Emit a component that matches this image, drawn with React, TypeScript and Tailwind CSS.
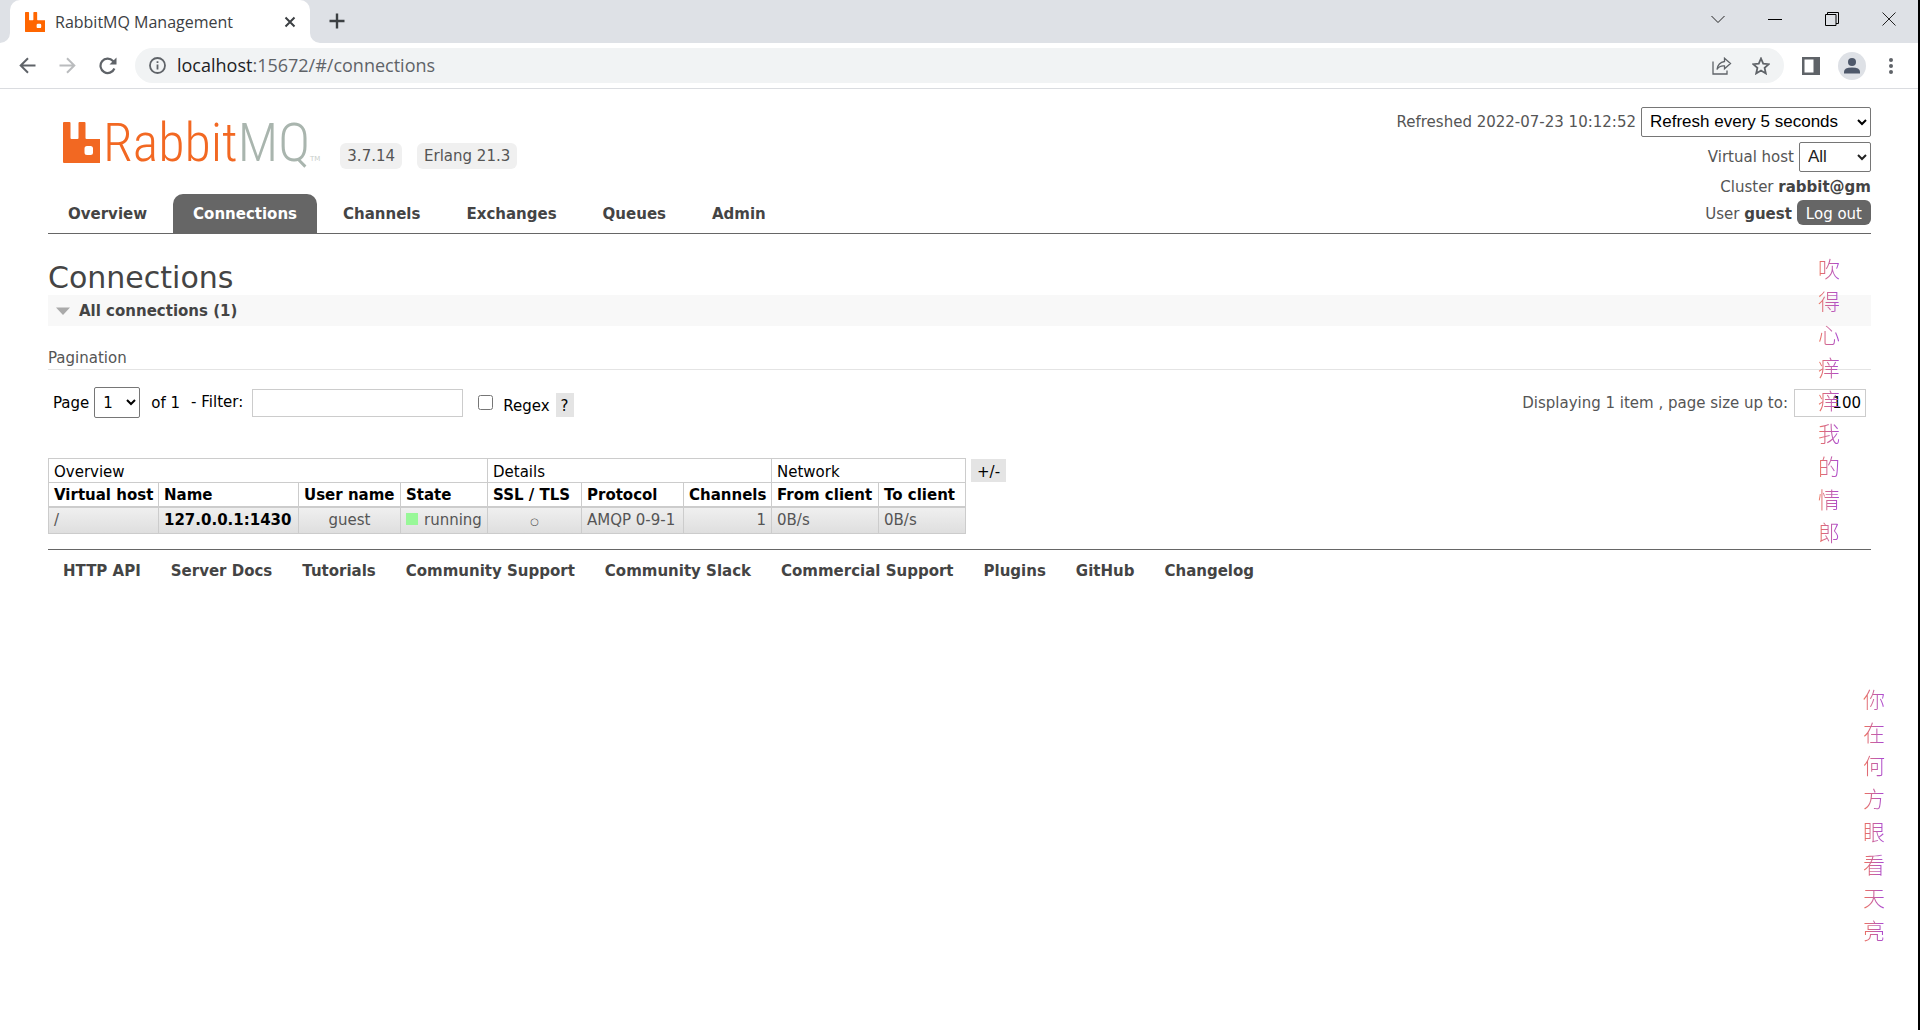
import React, { useState } from 'react';
import clsx from 'clsx';

const TABS = ['Overview', 'Connections', 'Channels', 'Exchanges', 'Queues', 'Admin'];

const FOOTER_LINKS = [
  'HTTP API',
  'Server Docs',
  'Tutorials',
  'Community Support',
  'Community Slack',
  'Commercial Support',
  'Plugins',
  'GitHub',
  'Changelog',
];

const RABBIT_PATH =
  'M1 0h5.500q1 0 1 1v15q0 1 1 1h6q1 0 1-1V1q0-1 1-1h5q1 0 1 1v15q0 1 1 1h13q1.500 0 1.500 1.500V40q0 1-1 1H1q-1 0-1-1V1q0-1 1-1zM24 24q-2.500 0-2.500 2.500v4q0 2.500 2.500 2.500h3.500q2.500 0 2.500-2.500v-4q0-2.500-2.500-2.500z';

const BrowserChrome: React.FC = () => (
  <div className="font-['Open_Sans',sans-serif]">
    {/* Tab strip */}
    <div className="flex h-[43px] bg-[#dee1e6]">
      <div className="relative ml-[10px] flex w-[300px] items-center rounded-t-[10px] bg-white pl-[15px] pr-[14px]">
        <svg className="absolute -left-[10px] bottom-0 size-[10px]" viewBox="0 0 10 10" fill="#fff">
          <path d="M10 0v10H0A10 10 0 0 0 10 0z" />
        </svg>
        <svg className="absolute -right-[10px] bottom-0 size-[10px]" viewBox="0 0 10 10" fill="#fff">
          <path d="M0 0v10h10A10 10 0 0 1 0 0z" />
        </svg>
        <svg className="h-5 w-5" viewBox="0 0 37 41" preserveAspectRatio="none" fill="#ff6600" fillRule="evenodd">
          <path d={RABBIT_PATH} />
        </svg>
        <span className="ml-[10px] flex-1 text-base text-[#3c4043]">RabbitMQ Management</span>
        <button aria-label="Close tab">
          <svg className="size-3" viewBox="0 0 12 12" stroke="#3c4043" strokeWidth="2">
            <path d="M1.500 1.500l9 9M10.500 1.500l-9 9" />
          </svg>
        </button>
      </div>
      <button className="ml-[19px] pb-px" aria-label="New tab">
        <svg className="size-4" viewBox="0 0 16 16" stroke="#3c4043" strokeWidth="2.400">
          <path d="M8 0.500v15M0.500 8h15" />
        </svg>
      </button>
      <div className="ml-auto flex items-center gap-[43px] pb-[6px] pr-[22px]">
        <button aria-label="Search tabs">
          <svg className="size-[14px]" viewBox="0 0 14 14" fill="none" stroke="#222" strokeWidth="1">
            <path d="M0.500 4l6.500 6.500L13.500 4" />
          </svg>
        </button>
        <button aria-label="Minimize">
          <svg className="size-[14px]" viewBox="0 0 14 14" stroke="#000" strokeWidth="1">
            <path d="M0 7.500h14" />
          </svg>
        </button>
        <button aria-label="Restore">
          <svg className="size-[14px]" viewBox="0 0 14 14" fill="none" stroke="#000" strokeWidth="1">
            <path d="M0.500 2.500h10.500v11H0.500zM2.500 2.500v-2h11v11h-2.500" />
          </svg>
        </button>
        <button aria-label="Close">
          <svg className="size-[14px]" viewBox="0 0 14 14" stroke="#222" strokeWidth="1">
            <path d="M0.500 0.500l13 13M13.500 0.500l-13 13" />
          </svg>
        </button>
      </div>
    </div>

    {/* Toolbar */}
    <div className="flex h-[46px] items-center border-b border-[#dadce0] bg-white pl-[19px] pr-[25px]">
      <button aria-label="Back">
        <svg className="size-[17px]" viewBox="0 0 17 17" fill="none" stroke="#5f6368" strokeWidth="2">
          <path d="M16.500 8.500H2M9 1.200L1.700 8.500 9 15.800" />
        </svg>
      </button>
      <button className="ml-[23px]" aria-label="Forward">
        <svg className="size-[17px]" viewBox="0 0 17 17" fill="none" stroke="#babcbe" strokeWidth="2">
          <path d="M0.500 8.500H15M8 1.200l7.300 7.300L8 15.800" />
        </svg>
      </button>
      <button className="ml-[23px]" aria-label="Reload">
        <svg className="size-[18px]" viewBox="0 0 18 18" fill="none" stroke="#5f6368" strokeWidth="2.200">
          <path d="M15.400 11.500A7.200 7.200 0 1 1 14 3.900L16 6" />
          <path d="M17.500 0.500v7h-7z" fill="#5f6368" stroke="none" />
        </svg>
      </button>
      <div className="ml-[18px] flex h-[35px] flex-1 items-center rounded-full bg-[#f1f3f4] px-[14px]">
        <svg className="size-[17px]" viewBox="0 0 17 17" fill="none" stroke="#5f6368" strokeWidth="1.800">
          <circle cx="8.500" cy="8.500" r="7.500" />
          <path d="M8.500 7.500v5M8.500 4.200v1.900" />
        </svg>
        <span className="ml-[11px] pb-0.5 text-lg text-[#5f6368]">
          <span className="text-[#202124]">localhost</span>:15672/#/connections
        </span>
        <button className="ml-auto" aria-label="Share">
          <svg className="h-[18px] w-5" viewBox="0 0 20 18" fill="none" stroke="#5f6368" strokeWidth="1.300">
            <path d="M1 4.500V17h14v-3.500" />
            <path d="M12.500 1.200L18.500 6.500l-6 5.300V9Q7.500 8.500 5 12.500 6 5.500 12.500 4.500z" />
          </svg>
        </button>
        <button className="ml-5" aria-label="Bookmark">
          <svg className="size-[18px]" viewBox="0 0 18 18" fill="none" stroke="#5f6368" strokeWidth="1.800">
            <path d="M9 1.500l2.200 5.200 5.600.5-4.200 3.700 1.200 5.500L9 13.500l-4.800 2.900 1.200-5.500-4.200-3.700 5.600-.5z" />
          </svg>
        </button>
      </div>
      <button className="ml-[18px]" aria-label="Side panel">
        <svg className="size-[18px]" viewBox="0 0 18 18" fill="#5f6368" fillRule="evenodd">
          <path d="M0 0h18v18H0zM2.500 2.500v13h9v-13z" />
        </svg>
      </button>
      <button className="ml-[18px]" aria-label="Profile">
        <svg className="size-7" viewBox="0 0 28 28" fill="#4e586a">
          <circle cx="14" cy="14" r="14" fill="#dee1e6" />
          <circle cx="14" cy="10" r="4" />
          <path d="M6 21.500v-1.700q0-4.300 8-4.300t8 4.300v1.700z" />
        </svg>
      </button>
      <button className="ml-[23px]" aria-label="Menu">
        <svg className="h-4 w-1" viewBox="0 0 4 16" fill="#5f6368">
          <circle cx="2" cy="2" r="2" />
          <circle cx="2" cy="8" r="2" />
          <circle cx="2" cy="14" r="2" />
        </svg>
      </button>
    </div>
  </div>
);

const Logo: React.FC = () => (
  <a href="#/" className="flex items-end text-[#f26822]">
    <svg className="mb-[6px] h-[41px] w-[37px]" viewBox="0 0 37 41" fill="currentColor" fillRule="evenodd">
      <path d={RABBIT_PATH} />
    </svg>
    <span className="ml-[3px] font-['Roboto_Condensed','Roboto',sans-serif] text-[54px] font-light leading-[52px]">
      Rabbit<span className="text-[#a9b5ae]">MQ</span>
    </span>
    <span className="mb-[6px] text-[7px] leading-[8px] text-[#c9cfcb]">TM</span>
  </a>
);

const Header: React.FC = () => {
  const [active, setActive] = useState('Connections');

  return (
    <header className="flex justify-between border-b border-[#666]">
      <div className="flex flex-col justify-end">
        <div className="mb-[25px] flex items-end pl-[15px]">
          <Logo />
          <span className="ml-5 rounded-md bg-[#f0f0f0] px-[7px] leading-[26px]">3.7.14</span>
          <span className="ml-[15px] rounded-md bg-[#f0f0f0] px-[7px] leading-[26px]">Erlang 21.3</span>
        </div>
        <nav className="flex gap-[6px]">
          {TABS.map((tab) => (
            <a
              key={tab}
              href={`#/${tab.toLowerCase()}`}
              onClick={() => setActive(tab)}
              className={clsx(
                'rounded-t-[10px] px-5 pt-0.5 font-bold leading-[37px]',
                tab === active ? 'bg-[#666] text-white' : 'text-[#444]',
              )}
            >
              {tab}
            </a>
          ))}
        </nav>
      </div>

      <div className="flex flex-col items-end pb-2 pt-[18px]">
        <div className="mb-[5px] flex items-center gap-[5px]">
          <label htmlFor="refresh">Refreshed 2022-07-23 10:12:52</label>
          <select
            id="refresh"
            className="h-[30px] w-[230px] rounded-[2px] border border-[#767676] bg-white px-1 pb-0.5 font-['Liberation_Sans',sans-serif] text-[17px] text-black"
          >
            <option>Refresh every 5 seconds</option>
            <option>Refresh every 30 seconds</option>
            <option>Do not refresh</option>
          </select>
        </div>
        <div className="mb-[5px] flex items-center gap-[5px]">
          <label htmlFor="vhost">Virtual host</label>
          <select
            id="vhost"
            className="h-[30px] w-[72px] rounded-[2px] border border-[#767676] bg-white px-1 pb-0.5 font-['Liberation_Sans',sans-serif] text-[17px] text-[#222]"
          >
            <option>All</option>
            <option>/</option>
          </select>
        </div>
        <div className="mb-[3px] leading-5">
          Cluster <b className="text-[#444]">rabbit@gm</b>
        </div>
        <div className="flex items-center gap-[5px]">
          <span className="pt-0.5">
            User <b className="text-[#444]">guest</b>
          </span>
          <button className="h-[25px] rounded-md bg-[#666] px-[9px] pt-0.5 text-white">Log out</button>
        </div>
      </div>
    </header>
  );
};

const Pagination: React.FC = () => (
  <div className="flex items-center justify-between px-[5px] pt-[17px]">
    <div className="flex items-center text-black">
      <label htmlFor="page">Page</label>
      <select
        id="page"
        className="ml-[5px] h-[31px] w-[46px] rounded-[2px] border border-[#767676] bg-white px-1 text-[15px]"
      >
        <option>1</option>
      </select>
      <span className="ml-[11px]">of 1</span>
      <label htmlFor="filter" className="ml-[11px] pb-0.5">- Filter:</label>
      <input id="filter" type="text" className="ml-[9px] h-7 w-[211px] border border-[#ccc] bg-white px-1" />
      <input id="regex" type="checkbox" className="ml-[15px] size-[15px]" />
      <label htmlFor="regex" className="ml-[10px] pt-[6px]">Regex</label>
      <button className="ml-[6px] mt-1 h-6 bg-[#e4e4e4] px-[5px] pt-0.5">?</button>
    </div>
    <div className="flex items-center gap-[6px]">
      <label htmlFor="size">Displaying 1 item , page size up to:</label>
      <input
        id="size"
        type="text"
        defaultValue="100"
        className="h-7 w-[72px] border border-[#ccc] bg-white px-1 text-right text-black"
      />
    </div>
  </div>
);

const GROUP_CELL = 'h-6 border border-[#ccc] px-[5px] pt-0.5 text-left font-normal';
const HEAD_CELL = 'h-6 border border-b-2 border-[#ccc] px-[5px] pt-0.5 text-left font-bold';
const DATA_CELL = 'h-[27px] border border-[#ccc] px-[5px]';

const ConnectionsTable: React.FC = () => (
  <div className="mt-10 flex items-start gap-[5px]">
    <table className="w-[917px] table-fixed border-collapse whitespace-nowrap leading-5">
      <colgroup>
        <col className="w-[110px]" />
        <col className="w-[140px]" />
        <col className="w-[102px]" />
        <col className="w-[87px]" />
        <col className="w-[94px]" />
        <col className="w-[102px]" />
        <col className="w-[88px]" />
        <col className="w-[107px]" />
        <col className="w-[87px]" />
      </colgroup>
      <thead className="text-black">
        <tr>
          <th colSpan={4} className={GROUP_CELL}>Overview</th>
          <th colSpan={3} className={GROUP_CELL}>Details</th>
          <th colSpan={2} className={GROUP_CELL}>Network</th>
        </tr>
        <tr>
          <th className={HEAD_CELL}>Virtual host</th>
          <th className={HEAD_CELL}>Name</th>
          <th className={HEAD_CELL}>User name</th>
          <th className={HEAD_CELL}>State</th>
          <th className={HEAD_CELL}>SSL / TLS</th>
          <th className={HEAD_CELL}>Protocol</th>
          <th className={HEAD_CELL}>Channels</th>
          <th className={HEAD_CELL}>From client</th>
          <th className={HEAD_CELL}>To client</th>
        </tr>
      </thead>
      <tbody>
        <tr className="bg-linear-to-b from-[#f0f0f0] to-[#dedede]">
          <td className={DATA_CELL}>/</td>
          <td className={DATA_CELL}>
            <a href="#/connections/1430" className="font-bold text-black">127.0.0.1:1430</a>
          </td>
          <td className={clsx(DATA_CELL, 'text-center')}>guest</td>
          <td className={DATA_CELL}>
            <span className="mr-[6px] inline-block size-3 bg-[#98f898]" />
            running
          </td>
          <td className={clsx(DATA_CELL, 'pt-1 text-center text-[10px]')}>○</td>
          <td className={DATA_CELL}>AMQP 0-9-1</td>
          <td className={clsx(DATA_CELL, 'text-right')}>1</td>
          <td className={DATA_CELL}>0B/s</td>
          <td className={DATA_CELL}>0B/s</td>
        </tr>
      </tbody>
    </table>
    <button className="mt-px h-[23px] bg-[#e4e4e4] px-[6px] pt-0.5 text-black">+/-</button>
  </div>
);

interface LyricProps {
  text: string;
  className: string;
}

// Desktop lyrics floating over the page, one character per line
const Lyric: React.FC<LyricProps> = ({ text, className }) => (
  <div
    className={clsx(
      "pointer-events-none absolute w-[22px] bg-linear-to-r from-[#f07050] to-[#a840d8] bg-clip-text font-['Noto_Sans_CJK_SC',sans-serif] text-[22px] font-light leading-[33px] text-transparent",
      className,
    )}
  >
    {text}
  </div>
);

export default function App() {
  return (
    <div className="relative min-h-screen border-r-2 border-black bg-white font-['DejaVu_Sans',sans-serif] text-[15px] leading-5 text-[#555]">
      <BrowserChrome />
      <div className="pl-12 pr-[47px]">
        <Header />
        <main>
          <h1 className="mt-[26px] text-[30px] leading-[35px] text-[#444]">Connections</h1>
          <h2>
            <button className="flex h-[31px] w-full items-center bg-[#f8f8f8] pl-2 font-bold text-[#444]">
              <svg className="mr-[9px] h-2 w-[14px]" viewBox="0 0 14 8" fill="#aaa">
                <path d="M0 0.500h14l-7 7.500z" />
              </svg>
              All connections (1)
            </button>
          </h2>
          <h3 className="mt-[21px] border-b border-[#e4e4e4] leading-[22px]">Pagination</h3>
          <Pagination />
          <ConnectionsTable />
        </main>
        <footer className="mt-[15px] flex gap-[30px] border-t border-[#666] px-[15px] pt-[11px] font-bold text-[#444]">
          {FOOTER_LINKS.map((link) => (
            <a key={link} href="#/">{link}</a>
          ))}
        </footer>
      </div>
      <Lyric text="吹得心痒痒我的情郎" className="right-[78px] top-[251px]" />
      <Lyric text="你在何方眼看天亮" className="right-[33px] top-[682px]" />
    </div>
  );
}
